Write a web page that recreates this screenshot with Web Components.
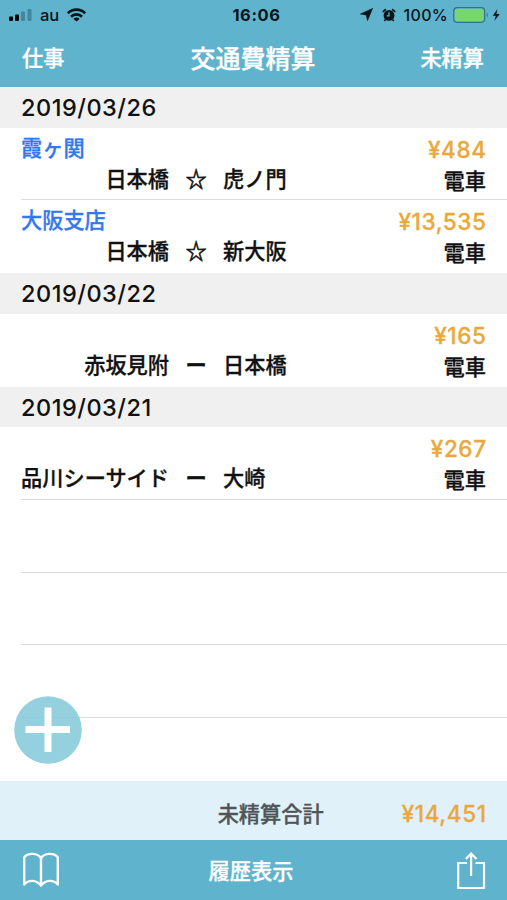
<!DOCTYPE html>
<html lang="ja">
<head>
<meta charset="utf-8">
<title>交通費精算</title>
<style>
  html, body { margin: 0; height: 100%; }
  body {
    --bar: #60b3cd;
    --amount: #eaa83a;
    --latin: Inter, "Liberation Sans", sans-serif;
    font: 500 21.2px/30px "Noto Sans CJK JP", sans-serif;
    -webkit-text-stroke: 0.3px;
    color: #111;
    background: #fff;
    overflow: hidden;
  }
</style>
</head>
<body>
<expense-app></expense-app>

<script>
// Attach an open shadow root and fill it.
function shadow(el, html) {
  el.attachShadow({ mode: 'open' }).innerHTML = html;
}

class StatusBar extends HTMLElement {
  constructor() {
    super();
    shadow(this, `
      <style>
        :host {
          display: grid;
          grid-template-columns: 1fr auto 1fr;
          align-items: center;
          height: 29px;
          padding: 0 6px 0 9px;
          font: 500 16.5px/20px var(--latin);
          -webkit-text-stroke: 0;
          color: #0b1519;
        }
        div { display: flex; align-items: center; }
        .right { justify-content: flex-end; }
        .time { font-weight: 700; font-size: 16.5px; letter-spacing: 0.6px; padding-left: 3px; }
        .carrier { margin: 0 8px; font-size: 16.5px; }
        .percent { margin: 0 5px 0 8px; font-size: 16px; letter-spacing: 0.3px; }
        svg { display: block; }
      </style>
      <div>
        <svg width="23" height="14" viewBox="0 0 23 14">
          <rect x="0" y="8.5" width="4" height="4.5" rx="1"/>
          <rect x="6" y="6.5" width="4" height="6.5" rx="1"/>
          <rect x="12" y="3.5" width="4" height="9.5" rx="1" fill="#4187a0"/>
          <rect x="18.5" y="1" width="4" height="12" rx="1" fill="#4187a0"/>
        </svg>
        <span class="carrier">au</span>
        <svg width="19" height="14" viewBox="0 0 19 14" fill="none" stroke="#0b1519" stroke-width="2.7">
          <path d="M.8 5.300A12.200 12.200 0 0 1 18.200 5.300M4 8.700A7.800 7.800 0 0 1 15 8.700"/>
          <path d="M9.500 13.600L6.400 10.900A4.300 4.300 0 0 1 12.600 10.900Z" fill="#0b1519" stroke="none"/>
        </svg>
      </div>
      <div class="time">16:06</div>
      <div class="right">
        <svg width="13" height="13" viewBox="0 0 13 13"><path d="M12.500 .5L7.500 12.500L6.200 6.900L.5 6Z" fill="#0b1519" stroke="#0b1519" stroke-width=".7" stroke-linejoin="round"/></svg>
        <svg style="margin-left:9px" width="14" height="14" viewBox="0 0 14 14" fill="none" stroke="#0b1519">
          <circle cx="7" cy="7.400" r="5.400" fill="#0b1519" stroke="none"/>
          <path d="M.8 4.200A7.800 7.800 0 0 1 4 1.200M10 1.200A7.800 7.800 0 0 1 13.200 4.200M3.500 11.500L2.300 13M10.500 11.500L11.700 13" stroke-width="1.600"/>
          <path d="M7 4.200V7.800H4.700" stroke="#60b3cd" stroke-width="1.300"/>
        </svg>
        <span class="percent">100%</span>
        <svg width="48" height="16" viewBox="0 0 48 16">
          <rect x=".7" y=".7" width="31" height="14.600" rx="3.500" fill="none" stroke="#31738a" stroke-width="1.200"/>
          <rect x="1.800" y="1.800" width="28.800" height="12.400" rx="2.300" fill="#76d672"/>
          <path d="M33.800 5.500Q36 8 33.800 10.500Z" fill="#31738a"/>
          <path d="M44.500 2L39.800 8.700H42.800L41.300 14L46.700 7H43.400Z" fill="#0b1519"/>
        </svg>
      </div>
    `);
  }
}

class NavBar extends HTMLElement {
  constructor() {
    super();
    shadow(this, `
      <style>
        :host {
          display: grid;
          grid-template-columns: 1fr auto 1fr;
          align-items: center;
          height: 58px;
          padding: 0 23px 3px 22px;
          box-sizing: border-box;
          color: #fff;
        }
        .title { font-size: 25px; }
        .right { text-align: right; }
      </style>
      <div><slot name="left"></slot></div>
      <div class="title"><slot></slot></div>
      <div class="right"><slot name="right"></slot></div>
    `);
  }
}

class DateHeader extends HTMLElement {
  constructor() {
    super();
    shadow(this, `
      <style>
        :host {
          display: block;
          height: 40.6px;
          padding-left: 21px;
          background: #f0f0f0;
          font: 500 23.5px/41px var(--latin);
          letter-spacing: 0.5px;
          -webkit-text-stroke: 0;
        }
      </style>
      <slot></slot>
    `);
  }
}

class ExpenseRow extends HTMLElement {
  constructor() {
    super();
    shadow(this, `
      <style>
        :host {
          display: flex;
          justify-content: space-between;
          height: 72.8px;
          box-sizing: border-box;
          margin-left: 21px;
          padding-right: 21px;
          white-space: nowrap;
        }
        :host([line]) { border-bottom: 1px solid #dcdcde; }
        .place { height: 30px; padding-top: 4px; color: #3478ee; }
        .route {
          display: grid;
          grid-template-columns: 148px 54px auto;
          padding-top: 1px;
        }
        .from { text-align: right; }
        .mark { text-align: center; -webkit-text-stroke: 0.6px; }
        .side { padding-top: 7px; text-align: right; }
        .amount {
          font: 500 22.5px/30px var(--latin);
          letter-spacing: 0.6px;
          margin-right: -0.6px;
          color: var(--amount);
        }
      </style>
      <div>
        <div class="place"><slot name="place"></slot></div>
        <div class="route">
          <span class="from"><slot name="from"></slot></span>
          <span class="mark"></span>
          <span><slot name="to"></slot></span>
        </div>
      </div>
      <div class="side">
        <div class="amount"><slot name="amount"></slot></div>
        <div class="kind"><slot></slot></div>
      </div>
    `);
  }

  connectedCallback() {
    // ☆ is a round trip, ー a single ride.
    this.shadowRoot.querySelector('.mark').textContent =
      this.hasAttribute('round') ? '☆' : 'ー';
  }
}

class BlankRow extends HTMLElement {
  constructor() {
    super();
    shadow(this, `
      <style>
        :host {
          display: block;
          height: 72.6px;
          box-sizing: border-box;
          margin-left: 21px;
          border-bottom: 1px solid #dcdcde;
        }
      </style>
    `);
  }
}

class AddButton extends HTMLElement {
  constructor() {
    super();
    shadow(this, `
      <style>
        :host { position: absolute; left: 14px; bottom: 17px; }
        svg { display: block; }
      </style>
      <svg width="68" height="68" viewBox="0 0 68 68">
        <circle cx="34" cy="34" r="33.800" fill="#84c8d9" fill-opacity=".86"/>
        <path d="M34 11.500V56M11.500 33.500H56" stroke="#fff" stroke-width="7"/>
      </svg>
    `);
  }
}

class TotalBar extends HTMLElement {
  constructor() {
    super();
    shadow(this, `
      <style>
        :host {
          display: flex;
          justify-content: flex-end;
          align-items: center;
          height: 59px;
          padding: 4px 21px 0 0;
          box-sizing: border-box;
          background: #e0f1fa;
          color: #505457;
        }
        .amount {
          width: 163px;
          padding-top: 2px;
          text-align: right;
          font: 500 22.5px/30px var(--latin);
          letter-spacing: 0.6px;
          margin-right: -0.6px;
          color: var(--amount);
        }
      </style>
      <slot></slot>
      <div class="amount"><slot name="amount"></slot></div>
    `);
  }
}

class ToolBar extends HTMLElement {
  constructor() {
    super();
    shadow(this, `
      <style>
        :host {
          display: grid;
          grid-template-columns: 1fr auto 1fr;
          align-items: center;
          height: 60px;
          padding: 0 21px 0 22px;
          box-sizing: border-box;
          background: var(--bar);
          color: #fff;
        }
        svg { display: block; fill: none; stroke: #fff; }
        .label { margin-right: 6px; }
        .share { justify-self: end; }
      </style>
      <svg width="38" height="36" viewBox="0 0 38 36" stroke-width="2.400" stroke-linejoin="round" stroke-linecap="round">
        <path d="M19 6.500C16 .5 5.500 .5 2.200 5.500V32.500C6.500 27.500 14.500 27.500 19 33.500C23.500 27.500 31.500 27.500 35.800 32.500V5.500C32.500 .5 22 .5 19 6.500V33"/>
      </svg>
      <div class="label"><slot></slot></div>
      <svg class="share" width="30" height="40" viewBox="0 0 30 40" stroke-width="2.200">
        <path d="M11 13H2.200V38H28V13H19.500M15.100 26V4M9.800 9L15.100 3.500L20.500 9"/>
      </svg>
    `);
  }
}

class ExpenseApp extends HTMLElement {
  constructor() {
    super();
    shadow(this, `
      <style>
        :host { display: flex; flex-direction: column; height: 900px; }
        header { background: var(--bar); }
        main { position: relative; flex: 1; overflow: hidden; }
      </style>
      <header>
        <status-bar></status-bar>
        <nav-bar><span slot="left">仕事</span>交通費精算<span slot="right">未精算</span></nav-bar>
      </header>
      <main>
        <date-header>2019/03/26</date-header>
        <expense-row round line>
          <span slot="place">霞ヶ関</span><span slot="from">日本橋</span><span slot="to">虎ノ門</span>
          <span slot="amount">¥484</span>電車
        </expense-row>
        <expense-row round>
          <span slot="place">大阪支店</span><span slot="from">日本橋</span><span slot="to">新大阪</span>
          <span slot="amount">¥13,535</span>電車
        </expense-row>
        <date-header>2019/03/22</date-header>
        <expense-row>
          <span slot="from">赤坂見附</span><span slot="to">日本橋</span>
          <span slot="amount">¥165</span>電車
        </expense-row>
        <date-header>2019/03/21</date-header>
        <expense-row line>
          <span slot="from">品川シーサイド</span><span slot="to">大崎</span>
          <span slot="amount">¥267</span>電車
        </expense-row>
        <blank-row></blank-row>
        <blank-row></blank-row>
        <blank-row></blank-row>
        <add-button></add-button>
      </main>
      <total-bar>未精算合計<span slot="amount">¥14,451</span></total-bar>
      <tool-bar>履歴表示</tool-bar>
    `);
  }
}

customElements.define('status-bar', StatusBar);
customElements.define('nav-bar', NavBar);
customElements.define('date-header', DateHeader);
customElements.define('expense-row', ExpenseRow);
customElements.define('blank-row', BlankRow);
customElements.define('add-button', AddButton);
customElements.define('total-bar', TotalBar);
customElements.define('tool-bar', ToolBar);
customElements.define('expense-app', ExpenseApp);
</script>
</body>
</html>
